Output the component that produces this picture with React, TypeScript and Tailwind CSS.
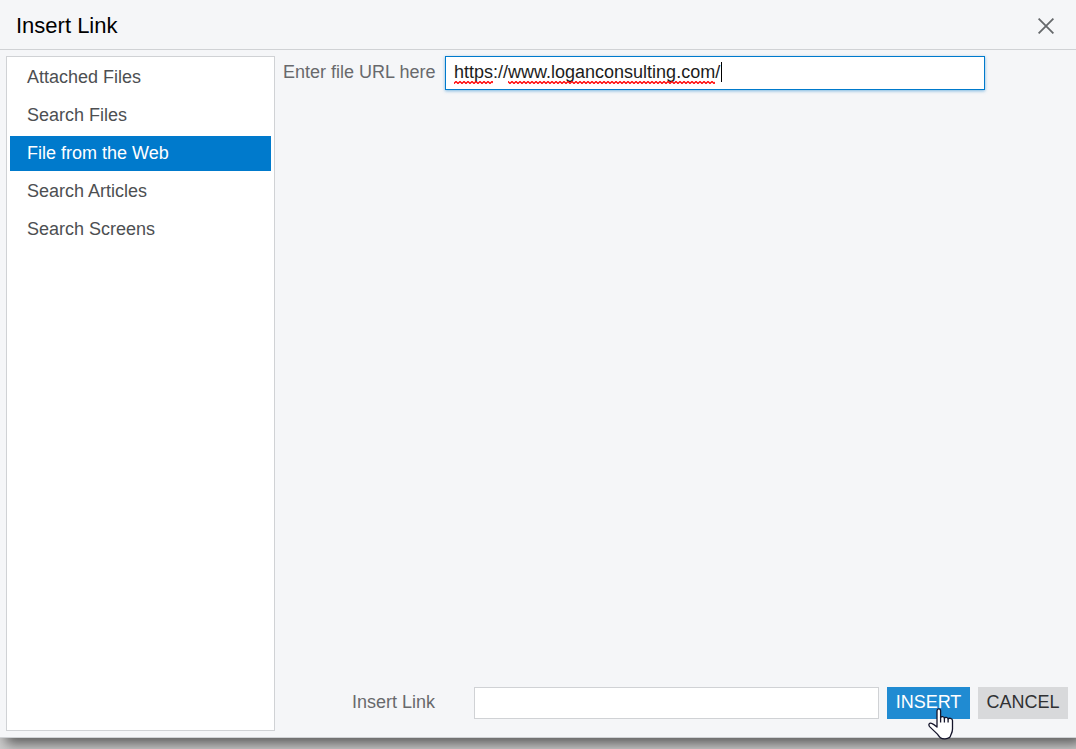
import { useState } from "react";
import { clsx } from "clsx";

const SOURCES = [
  "Attached Files",
  "Search Files",
  "File from the Web",
  "Search Articles",
  "Search Screens",
];

const CloseIcon = () => (
  <svg width="16" height="16" viewBox="0 0 16 16" fill="none" stroke="#65686b" strokeWidth="1.8">
    <path d="M0.6 0.6 15.4 15.4M15.4 0.6 0.6 15.4" />
  </svg>
);

const HandCursor = () => (
  <svg
    className="pointer-events-none absolute top-5 left-[41px]"
    width="26"
    height="33"
    viewBox="0 0 26 33"
    aria-hidden="true"
  >
    <path
      d="M9 20V4c0-2.800 3.600-2.800 3.600 0v6.500c.6-1.500 3.400-1.200 3.800.6.7-1.300 3.200-1 3.700.8.800-1.100 4.300-.8 4.400 1.600V22c0 3-.9 4.300-1.600 5.800-.6 1.400-.4 2-1.500 2.800-1.800 1.600-7 1.600-9 .1-1.300-.8-1.900-2.200-3-3.600L1.600 19.600c-1.600-2.200-.2-4 2-3.200C5.400 17 7 18.300 9 20z"
      fill="#fff"
      stroke="#14142a"
      strokeWidth="1.3"
      strokeLinejoin="round"
    />
    <path d="M12.600 10v5.500M16.400 11v4.500M20.100 11.800v3.700" stroke="#14142a" strokeWidth="1.300" />
  </svg>
);

// Spell checker underline plus the text caret of the focused field
const SpellMarks = () => (
  <svg
    className="pointer-events-none absolute top-1 left-[9px]"
    width="270"
    height="26"
    viewBox="0 0 270 26"
    aria-hidden="true"
  >
    <defs>
      <pattern id="squiggle" width="4" height="3" y="21" patternUnits="userSpaceOnUse">
        <path d="M-1 1.500 0 2.500 2 .5 4 2.500 5 1.500" fill="none" stroke="#ff0000" strokeWidth="1.300" />
      </pattern>
    </defs>
    <rect x="0" y="21" width="39" height="3" fill="url(#squiggle)" />
    <rect x="54" y="21" width="207" height="3" fill="url(#squiggle)" />
    <rect x="267" y="2" width="1" height="20" fill="#000" />
  </svg>
);

export default function App() {
  const [source, setSource] = useState("File from the Web");
  const [url, setUrl] = useState("https://www.loganconsulting.com/");
  const [link, setLink] = useState("");

  return (
    <div className="flex h-screen flex-col overflow-hidden bg-[#cdcdcd] pb-[11px] font-['Liberation_Sans',Arial,sans-serif] text-lg leading-6">
      <div
        role="dialog"
        aria-labelledby="dialog-title"
        className="flex min-h-0 flex-1 flex-col border-b border-[#d0d2d5] bg-[#f5f6f8] shadow-[6px_6px_12px_rgba(0,0,0,0.55)]"
      >
        {/* Title bar */}
        <header className="flex h-[50px] shrink-0 items-center justify-between border-b border-[#d0d2d5] px-4 pt-0.5">
          <h1 id="dialog-title" className="text-[22px] text-black">
            Insert Link
          </h1>
          <button type="button" aria-label="Close" className="mr-0.5 p-1">
            <CloseIcon />
          </button>
        </header>

        <div className="flex min-h-0 flex-1 gap-2 p-1.5">
          {/* Link sources */}
          <nav className="flex w-[269px] shrink-0 flex-col gap-[3px] border border-[#d0d2d5] bg-white p-[3px]">
            {SOURCES.map((name) => (
              <button
                key={name}
                type="button"
                onClick={() => setSource(name)}
                className={clsx(
                  "h-[35px] shrink-0 px-[17px] pb-0.5 text-left",
                  source === name ? "bg-[#007acc] text-white" : "text-[#4d4f52]",
                )}
              >
                {name}
              </button>
            ))}
          </nav>

          <main className="flex min-w-0 flex-1 flex-col justify-between">
            <div className="flex pr-[85px]">
              <label htmlFor="file-url" className="w-[162px] shrink-0 pt-1 text-[#68696c]">
                Enter file URL here
              </label>
              <div className="relative min-w-0 flex-1">
                <input
                  id="file-url"
                  type="text"
                  spellCheck={false}
                  value={url}
                  onChange={(e) => setUrl(e.target.value)}
                  className="block h-[34px] w-full border border-[#007acc] bg-white px-2 pb-0.5 text-[#1c1c1c] shadow-[0_1px_3px_rgba(0,122,204,0.5)] outline-none"
                />
                <SpellMarks />
              </div>
            </div>

            {/* Actions */}
            <div className="flex gap-2 pr-0.5 pb-3 pl-[69px]">
              <label htmlFor="link-text" className="w-[114px] shrink-0 pt-[3px] text-[#68696c]">
                Insert Link
              </label>
              <input
                id="link-text"
                type="text"
                value={link}
                onChange={(e) => setLink(e.target.value)}
                className="h-8 min-w-0 flex-1 border border-[#d0d2d5] bg-white px-2 outline-none"
              />
              <button type="button" className="relative h-8 w-[83px] shrink-0 bg-[#208bd2] pb-0.5 text-white">
                INSERT
                <HandCursor />
              </button>
              <button type="button" className="h-8 w-[90px] shrink-0 bg-[#d8d9db] pb-0.5 text-[#303133]">
                CANCEL
              </button>
            </div>
          </main>
        </div>
      </div>
    </div>
  );
}
